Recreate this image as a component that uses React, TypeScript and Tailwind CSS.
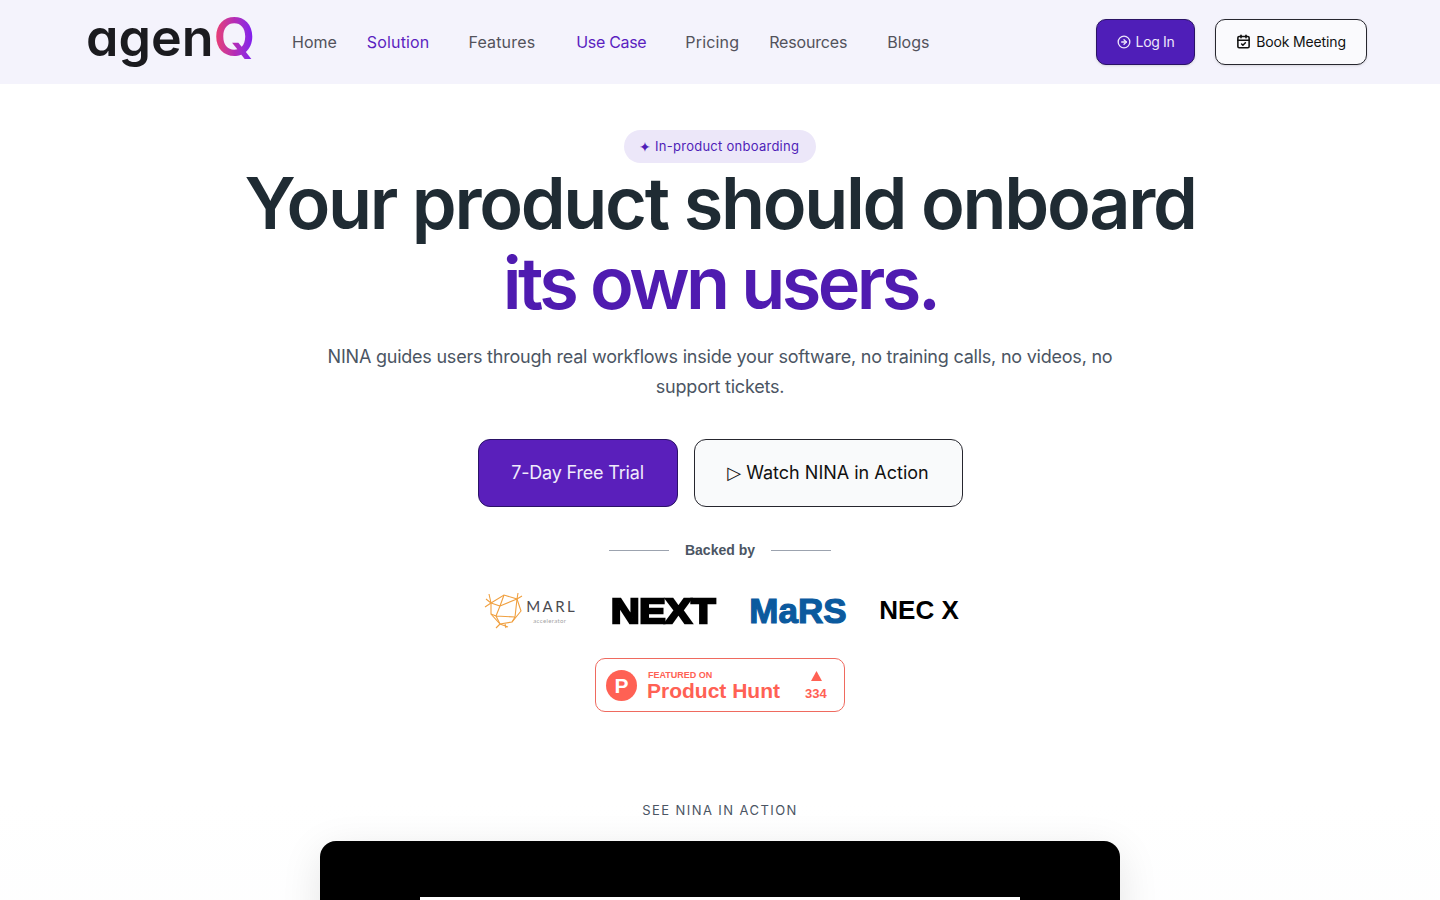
import React from "react";
import { ArrowRightCircle, CalendarCheck } from "lucide-react";

const body = "font-['Inter',sans-serif]";

function Logo() {
  return (
    <div className="flex items-baseline font-['Inter',sans-serif] font-semibold leading-none w-[165px] shrink-0 select-none pb-[10px] [font-feature-settings:'cv11']">
      <span className="text-[52px] -ml-[2px] tracking-[0em] text-[#1b1b1f]">agen</span>
      <span className="text-[54px] font-semibold bg-gradient-to-r from-[#ee3d6b] via-[#b52ab5] to-[#7a10f7] bg-clip-text text-transparent">
        Q
      </span>
    </div>
  );
}

function NavBar() {
  return (
    <header className="h-[84px] bg-[#f4f3fc] flex items-center pl-[88px] pr-[73px]">
      <Logo />
      <nav className="ml-[39px] flex items-center gap-[30px] text-[16px] text-[#52525b]">
        <a>Home</a>
        <a className="pr-[9px] tracking-[0.01em] text-[#5b1fc0]">Solution</a>
        <a className="pr-[11px] tracking-[0.01em]">Features</a>
        <a className="pr-[9px] tracking-[-0.02em] text-[#5b1fc0]">Use Case</a>
        <a className="tracking-[0.01em]">Pricing</a>
        <a className="pr-[10px] tracking-[-0.01em]">Resources</a>
        <a>Blogs</a>
      </nav>
      <div className="ml-auto flex items-center gap-5 text-[14px] tracking-[-0.01em]">
        <button className="h-[46px] w-[99px] rounded-[10px] bg-[#4f1eb8] border border-[#2a1266] text-[#ede6fb] flex items-center justify-center gap-[5px] shadow-sm pb-px tracking-[-0.025em]">
          <ArrowRightCircle size={14} strokeWidth={2.25} />
          Log In
        </button>
        <button className="h-[46px] w-[152px] rounded-[10px] bg-[#fafafd] border border-[#26262e] text-[#111] flex items-center justify-center gap-[5px] shadow-sm pb-px">
          <CalendarCheck size={15} strokeWidth={2.5} />
          Book Meeting
        </button>
      </div>
    </header>
  );
}

function MarlLogo() {
  return (
    <div className="flex items-center w-[90px] shrink-0">
      <svg width="40" height="38" viewBox="0 0 40 38" fill="none" stroke="#f0a040" strokeWidth="1.1" className="shrink-0">
        <path d="M7 12 L20 4 L33 8 L37 20 L28 31 L16 33 L7 23 Z" />
        <path d="M7 12 L16 15 L20 4 M16 15 L33 8 M16 15 L12 25 L7 23 M12 25 L31 26 M12 25 L16 33 M31 26 L28 31 M33 8 L31 26" />
        <path d="M2 8 L7 12 M1 16 L7 12 M5 3 L7 12 M34 2 L33 8 M38 5 L33 8 M16 33 L12 37 M21 33 L22 37 M16 33 L24 36" />
      </svg>
      <div className="ml-[2px] pt-[2px] flex flex-col font-['Lato',sans-serif] leading-none">
        <span className="text-[15px] tracking-[0.16em] text-[#4a4a50]">MARL</span>
        <span className="text-[6px] mt-[4px] ml-[7px] tracking-[0.06em] text-[#a3a3a3]">accelerator</span>
      </div>
    </div>
  );
}

function Logos() {
  return (
    <div className="mt-[29px] flex items-center h-10 ml-[3px]">
      <MarlLogo />
      <span className="ml-[37px] w-[104px] block origin-left scale-x-[1.13] font-['Liberation_Sans',sans-serif] font-bold text-[35px] leading-none tracking-[-0.01em] text-black [-webkit-text-stroke:2.5px_black]">
        NEXT
      </span>
      <span className="ml-[34px] w-[96px] font-['Liberation_Sans',sans-serif] font-bold text-[35px] leading-none text-[#0b5a9e] [-webkit-text-stroke:1.2px_#0b5a9e]">
        MaRS
      </span>
      <span className="ml-[34px] font-['Liberation_Sans',sans-serif] font-bold text-[26px] leading-none text-black">
        NEC X
      </span>
    </div>
  );
}

function ProductHuntBadge() {
  return (
    <div className="mt-[28px] w-[250px] h-[54px] rounded-[10px] border border-[#ef6a5f] bg-white flex items-center pl-[10px] font-['Liberation_Sans',sans-serif] text-[#ff6154]">
      <div className="w-[31px] h-[31px] rounded-full bg-[#ff6154] flex items-center justify-center text-white font-bold text-[21px] leading-none">
        P
      </div>
      <div className="ml-[10px] flex flex-col font-bold leading-none">
        <span className="text-[9px] ml-px mt-px">FEATURED ON</span>
        <span className="text-[21px]">Product Hunt</span>
      </div>
      <div className="ml-[25px] flex flex-col items-center font-bold leading-none">
        <svg width="11" height="10" viewBox="0 0 11 10" fill="#ff6154" className="ml-[2px]">
          <path d="M5.5 0 L11 10 L0 10 Z" />
        </svg>
        <span className="text-[13px] mt-[6px]">334</span>
      </div>
    </div>
  );
}

function Hero() {
  return (
    <section className="flex flex-col items-center pt-[46px]">
      <div className="h-[33px] w-[192px] rounded-full bg-[#ece7f9] text-[#4f1eb8] text-[13px] tracking-[0.02em] flex items-center justify-center gap-[4px] pr-[2px]">
        <span className="text-[14px]">✦</span>
        In-product onboarding
      </div>
      <h1 className="text-center text-[72px] leading-[80px] font-semibold text-[#1f2b33]">
        <span className="tracking-[-0.032em]">Your product should onboard</span>
        <br />
        <span className="text-[#4f1bb0] tracking-[-0.049em]">its own users.</span>
      </h1>
      <p className="mt-[19px] w-[800px] text-center text-[18px] leading-[30px] text-[#4b5563] tracking-[-0.0125em]">
        NINA guides users through real workflows inside your software, no training calls, no videos, no support tickets.
      </p>
      <div className="mt-[37px] flex gap-4 text-[18px]">
        <button className="h-[68px] w-[200px] rounded-[12px] bg-[#5a1fbb] border border-[#2a1266] text-[#f0ebfb] tracking-[-0.01em] pb-[2px]">
          7-Day Free Trial
        </button>
        <button className="h-[68px] w-[269px] rounded-[12px] bg-[#f9fafb] border border-[#26262e] text-[#111] pb-[2px]">
          <span className="font-['DejaVu_Sans',sans-serif]">▷</span> Watch NINA in Action
        </button>
      </div>
      <div className="mt-[33px] flex items-center gap-4 font-['Liberation_Sans',sans-serif] font-bold text-[14px] text-[#4b5563]">
        <span className="block w-[60px] h-px bg-[#9ca3af]" />
        Backed by
        <span className="block w-[60px] h-px bg-[#9ca3af]" />
      </div>
      <Logos />
      <ProductHuntBadge />
    </section>
  );
}

function Demo() {
  return (
    <section className="mt-[90px] flex flex-col items-center bg-gradient-to-b from-white to-[#f9fafb]">
      <div className="text-[13px] leading-[16px] tracking-[0.11em] text-[#4b5563] uppercase">See NINA in action</div>
      <div className="mt-[23px] w-[800px] h-[450px] rounded-[16px] bg-black pt-[56px] px-[100px] shadow-[0_10px_40px_rgba(0,0,0,0.1)]">
        <div className="h-[340px] bg-white" />
      </div>
    </section>
  );
}

export default function App() {
  return (
    <div className={`h-[900px] overflow-hidden bg-white ${body}`}>
      <NavBar />
      <Hero />
      <Demo />
    </div>
  );
}
